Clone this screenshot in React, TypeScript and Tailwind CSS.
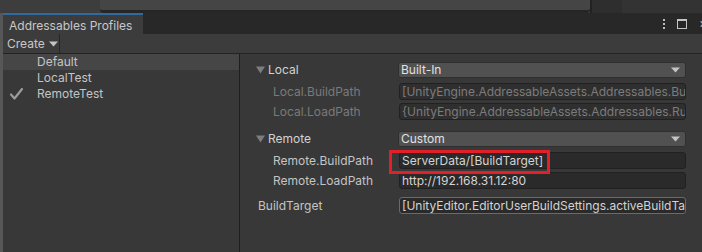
import React from 'react';

const font = { fontFamily: 'Inter, "Noto Sans", sans-serif' };

function Triangle() {
  return (
    <svg width="9" height="8" viewBox="0 0 9 8" className="shrink-0">
      <path d="M0 0.5 H9 L4.5 7.5 Z" fill="#7d7d7d" />
    </svg>
  );
}

function Caret({ color = '#c4c4c4' }: { color?: string }) {
  return (
    <svg width="9" height="6" viewBox="0 0 9 6" className="shrink-0">
      <path d="M0 0.5 H9 L4.5 5.5 Z" fill={color} />
    </svg>
  );
}

function Dropdown({ value }: { value: string }) {
  return (
    <div className="flex h-[16px] min-w-0 flex-1 items-center justify-between rounded-[3px] border border-[#303030] bg-[#515151] pl-[2px] pr-[5px] text-[12px] leading-[16px] text-[#e2e2e2]">
      <span>{value}</span>
      <Caret />
    </div>
  );
}

function Field({ value, disabled, outlined }: { value: string; disabled?: boolean; outlined?: boolean }) {
  return (
    <div
      className={
        'flex h-[17px] min-w-0 flex-1 items-center overflow-hidden whitespace-nowrap rounded-[3px] border pl-[2px] text-[12px] leading-[16px] ' +
        (outlined ? 'border-[#6a6a6a] ' : 'border-[#212121] ') +
        (disabled ? 'bg-[#2f2f2f] text-[#7c7c7c]' : 'bg-[#2a2a2a] text-[#d4d4d4]')
      }
    >
      {value}
    </div>
  );
}

type Row =
  | { kind: 'group'; label: string; value: string; mt: string }
  | { kind: 'field'; label: string; value: string; mt: string; disabled?: boolean; indent?: boolean; outlined?: boolean };

const rows: Row[] = [
  { kind: 'group', label: 'Local', value: 'Built-In', mt: 'mt-[8px]' },
  { kind: 'field', label: 'Local.BuildPath', value: '[UnityEngine.AddressableAssets.Addressables.BuildPath]', mt: 'mt-[5px]', disabled: true, indent: true },
  { kind: 'field', label: 'Local.LoadPath', value: '{UnityEngine.AddressableAssets.Addressables.RuntimePath}', mt: 'mt-[3px]', disabled: true, indent: true },
  { kind: 'group', label: 'Remote', value: 'Custom', mt: 'mt-[11px]' },
  { kind: 'field', label: 'Remote.BuildPath', value: 'ServerData/[BuildTarget]', mt: 'mt-[5px]', indent: true },
  { kind: 'field', label: 'Remote.LoadPath', value: 'http://192.168.31.12:80', mt: 'mt-[3px]', indent: true },
  { kind: 'field', label: 'BuildTarget', value: '[UnityEditor.EditorUserBuildSettings.activeBuildTarget]', mt: 'mt-[8px]', outlined: true },
];

export default function App() {
  return (
    <div className="relative flex h-[252px] w-[702px] flex-col overflow-hidden bg-[#3b3b3b] leading-[16px]" style={font}>
      {/* windows behind */}
      <div className="flex h-[13px] shrink-0">
        <div className="w-[100px] shrink-0 bg-[#3d3d3d]" />
        <div className="w-[490px] shrink-0 rounded-b-[4px] border-b-[3px] border-[#262626] bg-[#454545]" />
        <div className="w-[32px] shrink-0 border-l-2 border-[#222] bg-[#2e2e2e]" />
        <div className="flex-1 bg-[#333333]" />
      </div>

      <div className="flex min-h-0 flex-1">
        <div className="w-[3px] shrink-0 bg-[#575757]" />
        <div className="flex min-w-0 flex-1 flex-col bg-[#383838]">
          {/* tab header */}
          <div className="flex h-[21px] shrink-0 bg-[#282828]">
            <div className="flex w-[140px] shrink-0 items-center border-t-2 border-[#2f6aa0] bg-[#3c3c3c] pl-[6px] pt-[2px] text-[12px] text-[#c8c8c8]">
              Addressables Profiles
            </div>
            <div className="flex min-w-0 flex-1 items-center justify-end gap-[12px] overflow-hidden">
              <div className="flex flex-col gap-[2px]">
                <div className="h-[2px] w-[2px] bg-[#bdbdbd]" />
                <div className="h-[2px] w-[2px] bg-[#bdbdbd]" />
                <div className="h-[2px] w-[2px] bg-[#bdbdbd]" />
              </div>
              <div className="h-[10px] w-[10px] border border-t-2 border-[#c4c4c4]" />
              <div className="w-[3px] overflow-hidden text-[13px] leading-none text-[#c4c4c4]">×</div>
            </div>
          </div>

          {/* toolbar */}
          <div className="flex h-[20px] shrink-0 border-b border-[#232323] bg-[#3c3c3c]">
            <div className="flex w-[57px] items-center gap-[4px] border-r border-[#262626] pl-[4px] text-[12px] text-[#c8c8c8]">
              Create
              <Caret />
            </div>
          </div>

          {/* body */}
          <div className="flex min-h-0 flex-1">
            <div className="w-[237px] shrink-0 border-r border-[#1e1e1e]">
              <div className="flex h-[16px] items-center bg-[#464646] pl-[34px] text-[12px] text-[#c4c4c4]">Default</div>
              <div className="flex h-[16px] items-center pl-[34px] text-[12px] text-[#c4c4c4]">LocalTest</div>
              <div className="flex h-[16px] items-center text-[12px] text-[#c4c4c4]">
                <svg width="34" height="14" viewBox="0 0 34 14" className="shrink-0">
                  <path d="M8 7.5 L11.5 11.5 L19 2" stroke="#9c9c9c" strokeWidth="2.2" fill="none" strokeLinecap="round" strokeLinejoin="round" />
                </svg>
                RemoteTest
              </div>
            </div>

            <div className="flex min-w-0 flex-1 flex-col pl-[16px] pr-[16px]">
              {rows.map((r) =>
                r.kind === 'group' ? (
                  <div key={r.label} className={'flex min-w-0 items-center ' + r.mt}>
                    <div className="flex w-[142px] shrink-0 items-center gap-[3px] text-[12px] text-[#d2d2d2]">
                      <Triangle />
                      {r.label}
                    </div>
                    <Dropdown value={r.value} />
                  </div>
                ) : (
                  <div key={r.label} className={'flex min-w-0 items-center ' + r.mt}>
                    <div
                      className={
                        'w-[143px] shrink-0 text-[12px] ' +
                        (r.indent ? 'pl-[17px] ' : 'pl-[2px] ') +
                        (r.disabled ? 'text-[#7a7a7a]' : 'text-[#c4c4c4]')
                      }
                    >
                      {r.label}
                    </div>
                    <Field value={r.value} disabled={r.disabled} outlined={r.outlined} />
                  </div>
                )
              )}
            </div>
          </div>
        </div>
      </div>

      {/* annotation box */}
      <div className="absolute left-[389px] top-[150px] h-[24px] w-[161px] border-[3px] border-[#e2202a]" />
    </div>
  );
}
